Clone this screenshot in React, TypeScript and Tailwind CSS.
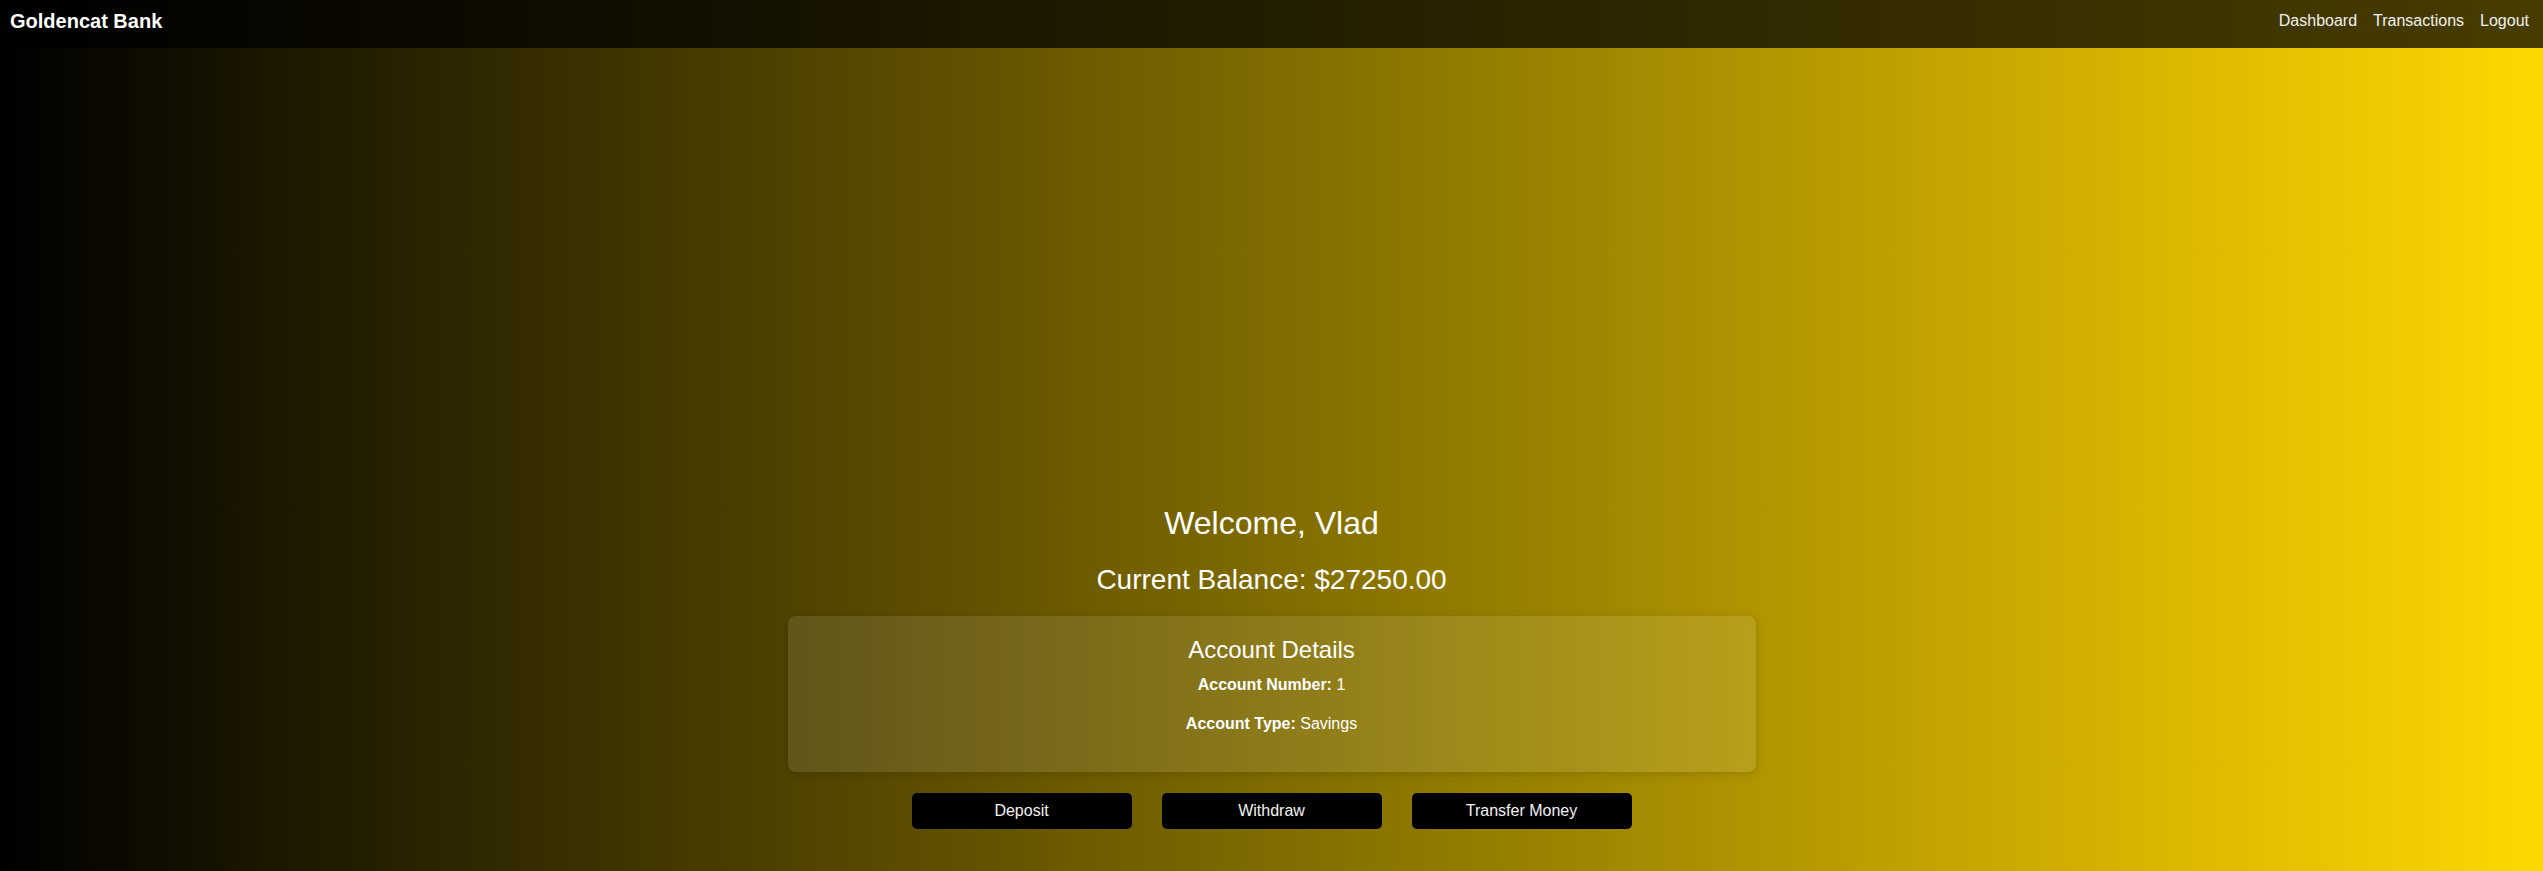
import React from "react";

const navLinks = ["Dashboard", "Transactions", "Logout"];
const actions = ["Deposit", "Withdraw", "Transfer Money"];

export default function App() {
  return (
    <div className="flex h-[871px] w-full flex-col bg-[linear-gradient(to_right,#000000,#ffd700)] font-['Liberation_Sans',Arial,sans-serif] text-white">
      <header className="flex h-[48px] shrink-0 items-center justify-between bg-black/[0.72] pb-[6px] pl-[10px] pr-[14px]">
        <h1 className="text-[20px] font-bold leading-[24px]">Goldencat Bank</h1>
        <nav className="flex gap-[16px] text-[16px] leading-[20px] text-[#f0f0f0]">
          {navLinks.map((link) => (
            <a key={link} href="#" className="hover:underline">
              {link}
            </a>
          ))}
        </nav>
      </header>

      <main className="flex flex-1 flex-col items-center justify-end pb-[42px]">
        <h2 className="text-[32px] leading-[37px]">Welcome, Vlad</h2>
        <p className="mt-[22px] text-[28px] leading-[32px]">
          Current Balance: $27250.00
        </p>

        <section className="mt-[20px] flex w-[968px] flex-col items-center rounded-[8px] bg-white/10 pb-[39px] pt-[20px] shadow-[0_2px_10px_rgba(0,0,0,0.15)]">
          <h3 className="text-[24px] leading-[28px]">Account Details</h3>
          <p className="mt-[12px] text-[16px] leading-[18px]">
            <strong>Account Number:</strong> 1
          </p>
          <p className="mt-[21px] text-[16px] leading-[18px]">
            <strong>Account Type:</strong> Savings
          </p>
        </section>

        <div className="mt-[21px] flex gap-[30px]">
          {actions.map((label) => (
            <button
              key={label}
              type="button"
              className="h-[36px] w-[220px] rounded-[5px] bg-black text-[16px] text-[#f2f2f2]"
            >
              {label}
            </button>
          ))}
        </div>
      </main>
    </div>
  );
}
